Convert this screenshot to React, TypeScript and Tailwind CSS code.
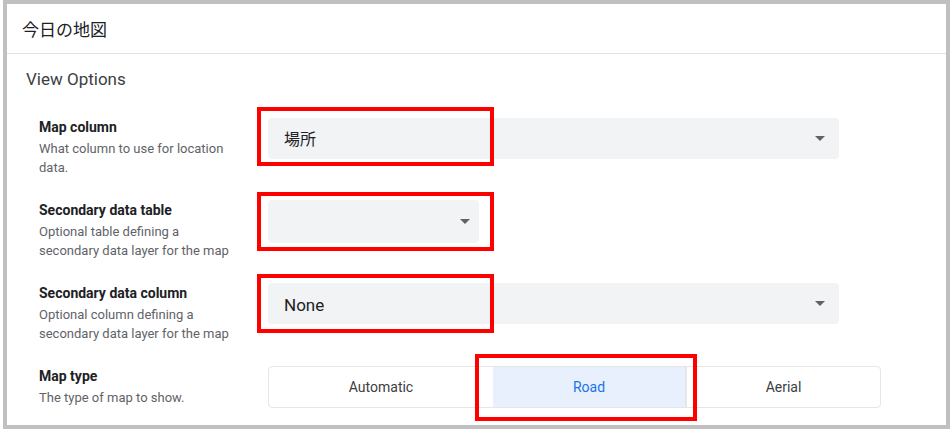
import React from "react";

const Arrow = () => (
  <svg width="10" height="5" viewBox="0 0 10 5" className="shrink-0">
    <path d="M0 0 L10 0 L5 5 Z" fill="#5f6368" />
  </svg>
);

const Row = ({
  title,
  desc,
  children,
}: {
  title: string;
  desc: string[];
  children: React.ReactNode;
}) => (
  <div className="flex h-[83px] items-start">
    <div className="w-[261px] shrink-0 pl-[32px] pr-[27px]">
      <div className="text-[14px] leading-[20px] font-bold text-[#202124] mb-[2px]">{title}</div>
      {desc.map((d) => (
        <div key={d} className="text-[13px] leading-[19px] text-[#5f6368] whitespace-nowrap">
          {d}
        </div>
      ))}
    </div>
    {children}
  </div>
);

export default function App() {
  return (
    <div
      className="relative w-[951px] h-[433px] bg-white"
      style={{ fontFamily: "Roboto, 'Noto Sans CJK JP', sans-serif" }}
    >
      <div className="ml-[3px] w-[947px] h-[429px] border-4 border-[#c0c0c0] bg-white overflow-hidden">
        <div className="h-[50px] border-b border-[#e3e3e3] flex items-center pl-[15px]">
          <span
            className="text-[17px] text-[#202124]"
            style={{ fontFamily: "'Noto Sans CJK JP', sans-serif" }}
          >
            今日の地図
          </span>
        </div>
        <div className="pt-[13px] pl-[19px] h-[63px]">
          <div className="text-[17px] leading-[24px] text-[#3c4043]">View Options</div>
        </div>
        <Row title="Map column" desc={["What column to use for location", "data."]}>
          <div className="mt-[1px] w-[571px] h-[41px] rounded-[4px] bg-[#f1f3f4] flex items-center justify-between pl-[16px] pr-[14px]">
            <span
              className="text-[16px] leading-[20px] text-[#202124] -mt-[2px]"
              style={{ fontFamily: "'Noto Sans CJK JP', sans-serif" }}
            >
              場所
            </span>
            <Arrow />
          </div>
        </Row>
        <Row
          title="Secondary data table"
          desc={["Optional table defining a", "secondary data layer for the map"]}
        >
          <div className="w-[211px] h-[43px] rounded-[4px] bg-[#f1f3f4] flex items-center justify-end pr-[9px]">
            <Arrow />
          </div>
        </Row>
        <Row
          title="Secondary data column"
          desc={["Optional column defining a", "secondary data layer for the map"]}
        >
          <div className="w-[571px] h-[41px] rounded-[4px] bg-[#f1f3f4] flex items-center justify-between pl-[16px] pr-[14px]">
            <span className="text-[17px] leading-[20px] text-[#202124] mt-[2px]">None</span>
            <Arrow />
          </div>
        </Row>
        <Row title="Map type" desc={["The type of map to show."]}>
          <div className="w-[613px] h-[42px] rounded-[4px] border border-[#e6e6e6] flex overflow-hidden">
            <div className="w-[224px] flex items-center justify-center text-[14px] text-[#3c4043]">
              Automatic
            </div>
            <div className="w-[194px] flex items-center justify-center bg-[#e8f0fe] border-r-2 border-[#e6e6e6] text-[14px] text-[#1a73e8]">
              Road
            </div>
            <div className="flex-1 flex items-center justify-center text-[14px] text-[#3c4043]">
              Aerial
            </div>
          </div>
        </Row>
      </div>

      {/* annotation overlays */}
      <div className="absolute left-[257px] top-[107px] w-[237px] h-[59px] border-4 border-[#ff0000]" />
      <div className="absolute left-[257px] top-[192px] w-[237px] h-[59px] border-4 border-[#ff0000]" />
      <div className="absolute left-[257px] top-[274px] w-[237px] h-[59px] border-4 border-[#ff0000]" />
      <div className="absolute left-[475px] top-[354px] w-[222px] h-[67px] border-4 border-[#ff0000]" />
    </div>
  );
}
